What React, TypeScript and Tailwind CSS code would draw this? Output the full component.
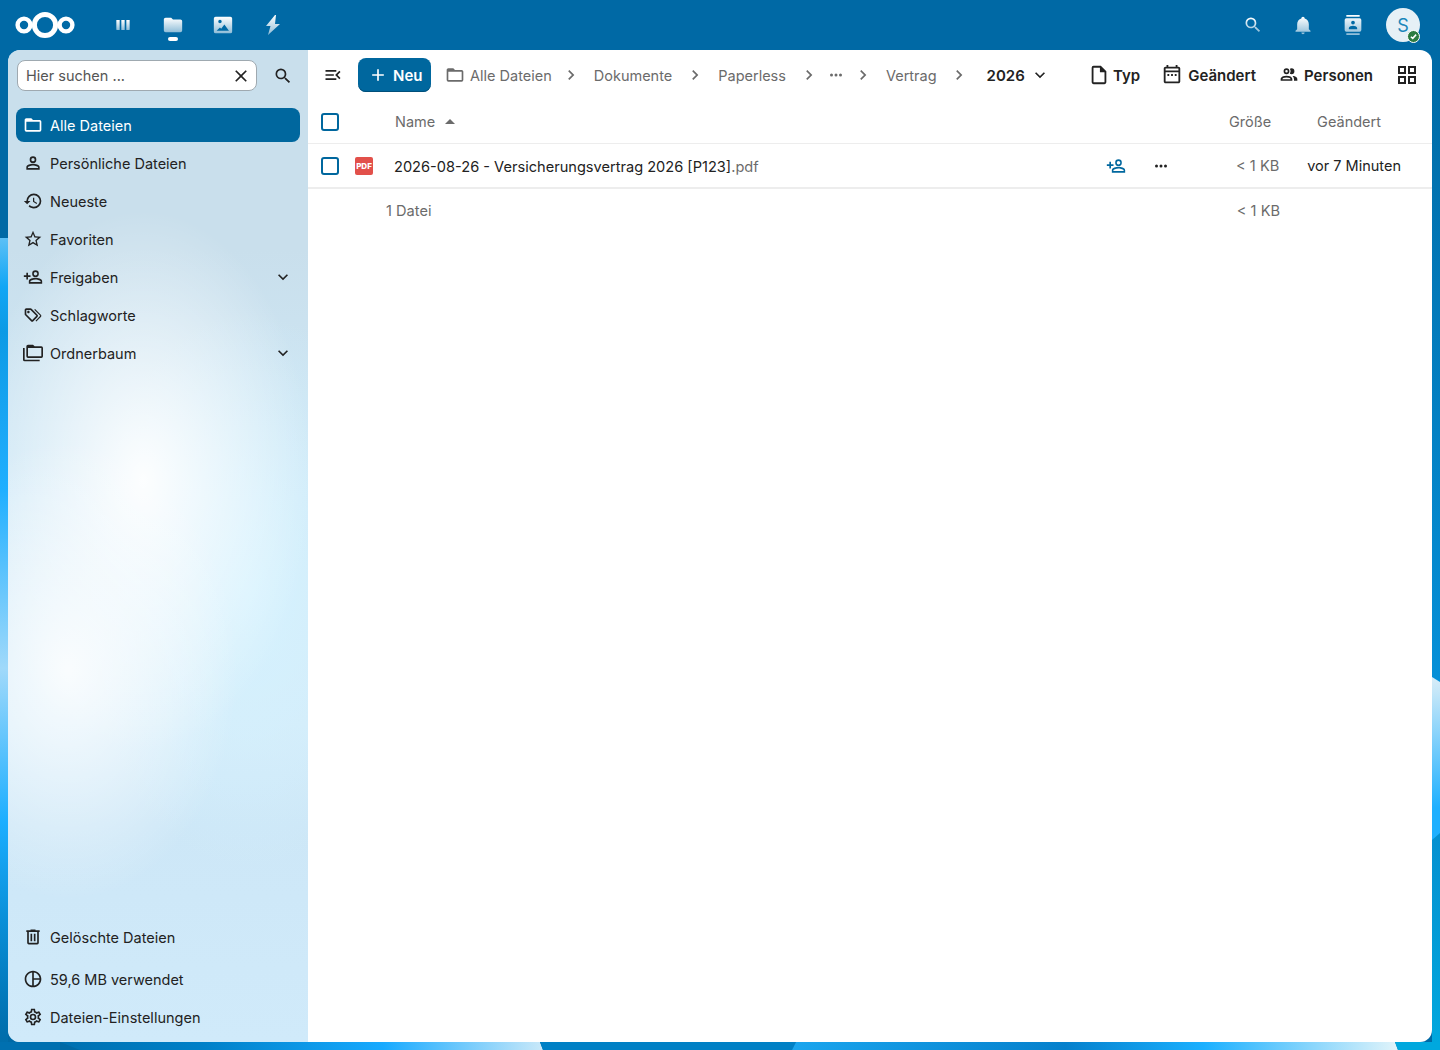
import React from "react";

const P = {
  folder: "M20,18H4V8H20M20,6H12L10,4H4C2.89,4 2,4.89 2,6V18A2,2 0 0,0 4,20H20A2,2 0 0,0 22,18V8C22,6.89 21.1,6 20,6Z",
  folderFill: "M10,4H4C2.89,4 2,4.89 2,6V18A2,2 0 0,0 4,20H20A2,2 0 0,0 22,18V8C22,6.89 21.1,6 20,6H12L10,4Z",
  account: "M12,4A4,4 0 0,1 16,8A4,4 0 0,1 12,12A4,4 0 0,1 8,8A4,4 0 0,1 12,4M12,6A2,2 0 0,0 10,8A2,2 0 0,0 12,10A2,2 0 0,0 14,8A2,2 0 0,0 12,6M12,13C14.67,13 20,14.33 20,17V20H4V17C4,14.33 9.33,13 12,13M12,14.9C9.03,14.9 5.9,16.36 5.9,17V18.1H18.1V17C18.1,16.36 14.97,14.9 12,14.9Z",
  history: "M13.5,8H12V13L16.28,15.54L17,14.33L13.5,12.25V8M13,3A9,9 0 0,0 4,12H1L4.96,16.03L9,12H6A7,7 0 0,1 13,5A7,7 0 0,1 20,12A7,7 0 0,1 13,19C11.07,19 9.32,18.21 8.06,16.94L6.64,18.36C8.27,20 10.5,21 13,21A9,9 0 0,0 22,12A9,9 0 0,0 13,3",
  star: "M12,15.39L8.24,17.66L9.23,13.38L5.91,10.5L10.29,10.13L12,6.09L13.71,10.13L18.09,10.5L14.77,13.38L15.76,17.66M22,9.24L14.81,8.63L12,2L9.19,8.63L2,9.24L7.45,13.97L5.82,21L12,17.27L18.18,21L16.54,13.97L22,9.24Z",
  accountPlus: "M15,4A4,4 0 0,0 11,8A4,4 0 0,0 15,12A4,4 0 0,0 19,8A4,4 0 0,0 15,4M15,5.9C16.16,5.9 17.1,6.84 17.1,8C17.1,9.16 16.16,10.1 15,10.1A2.1,2.1 0 0,1 12.9,8A2.1,2.1 0 0,1 15,5.9M4,7V10H1V12H4V15H6V12H9V10H6V7H4M15,13C12.33,13 7,14.33 7,17V20H23V17C23,14.33 17.67,13 15,13M15,14.9C17.97,14.9 21.1,16.36 21.1,17V18.1H8.9V17C8.9,16.36 12,14.9 15,14.9Z",
  tags: "M6.5 10C7.3 10 8 9.3 8 8.5S7.3 7 6.5 7 5 7.7 5 8.5 5.7 10 6.5 10M9 6L16 13L11 18L4 11V6H9M9 4H4C2.9 4 2 4.9 2 6V11C2 11.6 2.2 12.1 2.6 12.4L9.6 19.4C9.9 19.8 10.4 20 11 20S12.1 19.8 12.4 19.4L17.4 14.4C17.8 14 18 13.5 18 13C18 12.4 17.8 11.9 17.4 11.6L10.4 4.6C10.1 4.2 9.6 4 9 4M13.5 5.7L14.5 4.7L21.4 11.6C21.8 12 22 12.5 22 13S21.8 14.1 21.4 14.4L16 19.8L15 18.8L20.7 13L13.5 5.7Z",
  folders: "M22,4A2,2 0 0,1 24,6V16A2,2 0 0,1 22,18H6A2,2 0 0,1 4,16V4A2,2 0 0,1 6,2H12L14,4H22M2,6V20H20V22H2A2,2 0 0,1 0,20V11H0V6H2M6,6V16H22V6H6Z",
  trash: "M9,3V4H4V6H5V19A2,2 0 0,0 7,21H17A2,2 0 0,0 19,19V6H20V4H15V3H9M7,6H17V19H7V6M9,8V17H11V8H9M13,8V17H15V8H13Z",
  pie: "M12 2C6.5 2 2 6.5 2 12S6.5 22 12 22 22 17.5 22 12 17.5 2 12 2M13 4.1C16.6 4.5 19.5 7.4 19.9 11H13V4.1M4 12C4 7.9 7.1 4.5 11 4.1V19.9C7.1 19.5 4 16.1 4 12M13 19.9V13H19.9C19.5 16.6 16.6 19.5 13 19.9Z",
  cog: "M12,8A4,4 0 0,1 16,12A4,4 0 0,1 12,16A4,4 0 0,1 8,12A4,4 0 0,1 12,8M12,10A2,2 0 0,0 10,12A2,2 0 0,0 12,14A2,2 0 0,0 14,12A2,2 0 0,0 12,10M10,22C9.75,22 9.54,21.82 9.5,21.58L9.13,18.93C8.5,18.68 7.96,18.34 7.44,17.94L4.95,18.95C4.73,19.03 4.46,18.95 4.34,18.73L2.34,15.27C2.21,15.05 2.27,14.78 2.46,14.63L4.57,12.97L4.5,12L4.57,11L2.46,9.37C2.27,9.22 2.21,8.95 2.34,8.73L4.34,5.27C4.46,5.05 4.73,4.96 4.95,5.05L7.44,6.05C7.96,5.66 8.5,5.32 9.13,5.07L9.5,2.42C9.54,2.18 9.75,2 10,2H14C14.25,2 14.46,2.18 14.5,2.42L14.87,5.07C15.5,5.32 16.04,5.66 16.56,6.05L19.05,5.05C19.27,4.96 19.54,5.05 19.66,5.27L21.66,8.73C21.79,8.95 21.73,9.22 21.54,9.37L19.43,11L19.5,12L19.43,13L21.54,14.63C21.73,14.78 21.79,15.05 21.66,15.27L19.66,18.73C19.54,18.95 19.27,19.04 19.05,18.95L16.56,17.95C16.04,18.34 15.5,18.68 14.87,18.93L14.5,21.58C14.46,21.82 14.25,22 14,22H10M11.25,4L10.88,6.61C9.68,6.86 8.62,7.5 7.85,8.39L5.44,7.35L4.69,8.65L6.8,10.2C6.4,11.37 6.4,12.64 6.8,13.8L4.68,15.36L5.43,16.66L7.86,15.62C8.63,16.5 9.68,17.14 10.87,17.38L11.24,20H12.76L13.13,17.39C14.32,17.14 15.37,16.5 16.14,15.62L18.57,16.66L19.32,15.36L17.2,13.81C17.6,12.64 17.6,11.37 17.2,10.2L19.31,8.65L18.56,7.35L16.15,8.39C15.38,7.5 14.32,6.86 13.12,6.62L12.75,4H11.25Z",
  magnify: "M9.5,3A6.5,6.5 0 0,1 16,9.5C16,11.11 15.41,12.59 14.44,13.73L14.71,14H15.5L20.5,19L19,20.5L14,15.5V14.71L13.73,14.44C12.59,15.41 11.11,16 9.5,16A6.5,6.5 0 0,1 3,9.5A6.5,6.5 0 0,1 9.5,3M9.5,5C7,5 5,7 5,9.5C5,12 7,14 9.5,14C12,14 14,12 14,9.5C14,7 12,5 9.5,5Z",
  close: "M19,6.41L17.59,5L12,10.59L6.41,5L5,6.41L10.59,12L5,17.59L6.41,19L12,13.41L17.59,19L19,17.59L13.41,12L19,6.41Z",
  plus: "M19,13H13V19H11V13H5V11H11V5H13V11H19V13Z",
  right: "M8.59,16.58L13.17,12L8.59,7.41L10,6L16,12L10,18L8.59,16.58Z",
  down: "M7.41,8.58L12,13.17L16.59,8.58L18,10L12,16L6,10L7.41,8.58Z",
  dots: "M16,12A2,2 0 0,1 18,10A2,2 0 0,1 20,12A2,2 0 0,1 18,14A2,2 0 0,1 16,12M10,12A2,2 0 0,1 12,10A2,2 0 0,1 14,12A2,2 0 0,1 12,14A2,2 0 0,1 10,12M4,12A2,2 0 0,1 6,10A2,2 0 0,1 8,12A2,2 0 0,1 6,14A2,2 0 0,1 4,12Z",
  file: "M14,2H6A2,2 0 0,0 4,4V20A2,2 0 0,0 6,22H18A2,2 0 0,0 20,20V8L14,2M18,20H6V4H13V9H18V20Z",
  calendar: "M21 5V19C21 20.11 20.11 21 19 21H5C3.89 21 3 20.1 3 19V5C3 3.9 3.9 3 5 3H6V1H8V3H16V1H18V3H19C20.11 3 21 3.9 21 5M5 7H19V5H5V7M19 19V9H5V19H19M7 11H9V13H7V11M11 11H13V13H11V11M15 11H17V13H15V11Z",
  people: "M13.07 10.41A5 5 0 0 0 13.07 4.59A3.39 3.39 0 0 1 15 4A3.5 3.5 0 0 1 15 11A3.39 3.39 0 0 1 13.07 10.41M5.5 7.5A3.5 3.5 0 1 1 9 11A3.5 3.5 0 0 1 5.5 7.5M7.5 7.5A1.5 1.5 0 1 0 9 6A1.5 1.5 0 0 0 7.5 7.5M16 17V19H2V17S2 13 9 13 16 17 16 17M14 17C13.86 16.22 12.67 15 9 15S4.07 16.22 4 17M15.95 13A5.32 5.32 0 0 1 18 17V19H22V17S22 13.37 15.94 13Z",
  grid: "M3 11H11V3H3M5 5H9V9H5M13 21H21V13H13M15 15H19V19H15M3 21H11V13H3M5 15H9V19H5M13 3V11H21V3M19 9H15V5H19Z",
  bell: "M21,19V20H3V19L5,17V11C5,7.9 7.03,5.17 10,4.29C10,4.19 10,4.1 10,4A2,2 0 0,1 12,2A2,2 0 0,1 14,4C14,4.1 14,4.19 14,4.29C16.97,5.17 19,7.9 19,11V17L21,19M14,21A2,2 0 0,1 12,23A2,2 0 0,1 10,21",
  contacts: "M20,0H4V2H20V0M4,24H20V22H4V24M20,4H4A2,2 0 0,0 2,6V18A2,2 0 0,0 4,20H20A2,2 0 0,0 22,18V6A2,2 0 0,0 20,4M12,6.75A2.25,2.25 0 0,1 14.25,9A2.25,2.25 0 0,1 12,11.25A2.25,2.25 0 0,1 9.75,9A2.25,2.25 0 0,1 12,6.75M17,17H7V15.5C7,13.83 10.33,13 12,13C13.67,13 17,13.83 17,15.5V17Z",
  photos: "M4 3H20A2 2 0 0 1 22 5V19A2 2 0 0 1 20 21H4A2 2 0 0 1 2 19V5A2 2 0 0 1 4 3ZM8.7 6.4A1.9 1.9 0 1 0 8.7 10.2A1.9 1.9 0 1 0 8.7 6.4ZM5 18.3L8.7 14.7L10 16L13.5 11.5L18.5 18.3Z",
  bolt: "M14.4 0L3.6 13.2H9L6 24L20.4 10.8H14.4L15.6 0Z",
  dashboard: "M4 6H8V18H5A1 1 0 0 1 4 17ZM10 6H14V18H10ZM16 6H20V17A1 1 0 0 1 19 18H16Z",
  toggle: "M21,15.61L19.59,17L14.58,12L19.59,7L21,8.39L17.44,12L21,15.61M3,6H16V8H3V6M3,13V11H13V13H3M3,18V16H16V18H3Z",
};

function Icon({ d, size = 20, className = "", fill = "currentColor" }: { d: string; size?: number; className?: string; fill?: string }) {
  return (
    <svg width={size} height={size} viewBox="0 0 24 24" className={`shrink-0 ${className}`} fill={fill} fillRule="evenodd">
      <path d={d} />
    </svg>
  );
}

function HeaderIcon({ d, size = 20, active = false }: { d: string; size?: number; active?: boolean }) {
  return (
    <div className="relative flex w-[50px] h-[50px] items-center justify-center">
      <Icon d={d} size={size} fill="url(#headerGrad)" />
      {active && <span className="absolute left-[20px] top-[37px] h-[4px] w-[10px] rounded-full bg-white" />}
    </div>
  );
}

function NavRow({ d, label, active, chevron, size = 20 }: { d: string; label: string; active?: boolean; chevron?: boolean; size?: number }) {
  return (
    <div className={`flex h-[34px] items-center rounded-lg pr-[8px] ${active ? "bg-[#00679e] text-white" : "text-[#222222]"}`}>
      <div className="flex w-[34px] items-center justify-center">
        <Icon d={d} size={size} />
      </div>
      <span className="pt-[2px] text-[14.5px] leading-[20px] whitespace-nowrap">{label}</span>
      {chevron && <Icon d={P.down} size={20} className="ml-auto mr-[-1px] text-[#222222]" />}
    </div>
  );
}

function Crumb({ label, chevronClass = "mx-[13px]" }: { label: string; chevronClass?: string }) {
  return (
    <>
      <span className="pt-[2px] text-[14.5px] whitespace-nowrap text-[#6b6b6b]">{label}</span>
      <Icon d={P.right} size={20} className={`${chevronClass} text-[#6b6b6b]`} />
    </>
  );
}

function Filter({ d, label, size = 20, gap = "gap-[5px]", className = "" }: { d: string; label: string; size?: number; gap?: string; className?: string }) {
  return (
    <div className={`flex items-center ${gap} ${className}`}>
      <Icon d={d} size={size} className="text-[#222222]" />
      <span className="pt-[3px] text-[15px] font-semibold whitespace-nowrap text-[#222222]">{label}</span>
    </div>
  );
}

function Check() {
  return <span className="block h-[18px] w-[18px] rounded-[3px] border-2 border-[#00679e] bg-white" />;
}

export default function App() {
  return (
    <div className="relative flex h-[1050px] w-[1440px] flex-col overflow-hidden bg-[#0069a5] font-['Inter','Liberation_Sans',sans-serif]">
      <svg width="0" height="0" className="absolute">
        <defs>
          <linearGradient id="headerGrad" x1="0" y1="0" x2="0" y2="1">
            <stop offset="0" stopColor="#ffffff" />
            <stop offset="1" stopColor="#8fbdd8" />
          </linearGradient>
        </defs>
      </svg>

      {/* wallpaper */}
      <svg className="absolute left-0 top-0" width="1440" height="1050" viewBox="0 0 1440 1050">
        <defs>
          <linearGradient id="wallLeft" x1="0" y1="238" x2="0" y2="1050" gradientUnits="userSpaceOnUse">
            <stop offset="0" stopColor="#5cc0f6" />
            <stop offset="0.06" stopColor="#12a6f5" />
            <stop offset="0.115" stopColor="#0d9ae5" />
            <stop offset="0.31" stopColor="#20afff" />
            <stop offset="0.53" stopColor="#a0d9fa" />
            <stop offset="0.72" stopColor="#1caeff" />
            <stop offset="0.84" stopColor="#0a8fd8" />
            <stop offset="0.97" stopColor="#0070b0" />
            <stop offset="1" stopColor="#006ca8" />
          </linearGradient>
          <linearGradient id="wallBottomLeft" x1="60" y1="0" x2="542" y2="0" gradientUnits="userSpaceOnUse">
            <stop offset="0" stopColor="#0070b0" />
            <stop offset="0.3" stopColor="#0080c8" />
            <stop offset="0.67" stopColor="#18aaff" />
            <stop offset="1" stopColor="#c8e8f9" />
          </linearGradient>
          <linearGradient id="wallBottom" x1="794" y1="0" x2="1396" y2="0" gradientUnits="userSpaceOnUse">
            <stop offset="0" stopColor="#1aa5ee" />
            <stop offset="0.45" stopColor="#0580cc" />
            <stop offset="0.68" stopColor="#1bb0ff" />
            <stop offset="1" stopColor="#dff3fa" />
          </linearGradient>
          <linearGradient id="wallRightTop" x1="0" y1="50" x2="0" y2="680" gradientUnits="userSpaceOnUse">
            <stop offset="0" stopColor="#006aa5" />
            <stop offset="1" stopColor="#0590d8" />
          </linearGradient>
          <linearGradient id="wallRightMid" x1="0" y1="680" x2="0" y2="840" gradientUnits="userSpaceOnUse">
            <stop offset="0" stopColor="#d5ecf8" />
            <stop offset="0.8" stopColor="#1fb0ff" />
            <stop offset="1" stopColor="#1fb0ff" />
          </linearGradient>
          <linearGradient id="wallRightBottom" x1="0" y1="835" x2="0" y2="1050" gradientUnits="userSpaceOnUse">
            <stop offset="0" stopColor="#0590d0" />
            <stop offset="1" stopColor="#00a8de" />
          </linearGradient>
        </defs>
        <rect x="0" y="238" width="8" height="812" fill="url(#wallLeft)" />
        <rect x="0" y="1042" width="60" height="8" fill="#0070b0" />
        <polygon points="60,1042 540,1042 543,1050 80,1050" fill="url(#wallBottomLeft)" />
        <polygon points="540,1042 796,1042 792,1050 543,1050" fill="#0080c5" />
        <polygon points="796,1042 1395,1042 1398,1050 792,1050" fill="url(#wallBottom)" />
        <polygon points="1395,1042 1440,1042 1440,1050 1398,1050" fill="#00a8de" />
        <rect x="1432" y="50" width="8" height="640" fill="url(#wallRightTop)" />
        <rect x="1432" y="830" width="8" height="212" fill="url(#wallRightBottom)" />
        <polygon points="1432,677 1440,682 1440,833 1432,840" fill="url(#wallRightMid)" />
      </svg>

      <header className="relative flex h-[50px] shrink-0 items-center">
        <svg className="ml-[14px] shrink-0" width="62" height="30" viewBox="0 0 62 30" fill="none" stroke="#ffffff">
          <circle cx="10" cy="15" r="6.4" strokeWidth="4.4" />
          <circle cx="31" cy="15" r="10.6" strokeWidth="5" />
          <circle cx="52" cy="15" r="6.4" strokeWidth="4.4" />
        </svg>
        <div className="ml-[22px] flex">
          <HeaderIcon d={P.dashboard} size={20} />
          <HeaderIcon d={P.folderFill} size={22} active />
          <HeaderIcon d={P.photos} size={22} />
          <HeaderIcon d={P.bolt} size={20} />
        </div>
        <div className="ml-auto mr-[20px] flex items-center">
          <HeaderIcon d={P.magnify} size={20} />
          <HeaderIcon d={P.bell} size={20} />
          <HeaderIcon d={P.contacts} size={20} />
          <div className="relative ml-[8px] flex h-[34px] w-[34px] items-center justify-center rounded-full bg-[#e6f0f6] text-[18px] text-[#1a86ba]">
            S
            <span className="absolute left-[21px] top-[22px] flex h-[13px] w-[13px] items-center justify-center rounded-full border border-white bg-[#2d7b41]">
              <svg width="9" height="9" viewBox="0 0 24 24" fill="none" stroke="#ffffff" strokeWidth="4">
                <path d="M5 12.5L10 17L19 7" />
              </svg>
            </span>
          </div>
        </div>
      </header>

      <main className="relative mx-[8px] flex h-[992px] overflow-hidden rounded-xl">
        <aside className="flex w-[300px] shrink-0 flex-col bg-[#cfe6f5] bg-[radial-gradient(ellipse_170px_230px_at_60px_620px,rgba(255,255,255,0.85),transparent),radial-gradient(ellipse_170px_270px_at_135px_430px,rgba(255,255,255,0.95),transparent),radial-gradient(ellipse_170px_280px_at_240px_540px,rgba(214,243,255,0.9),transparent),linear-gradient(180deg,#c9dfec_0%,#c9dfec_20%,#d0e9f7_45%,#d3ebf9_68%,#cde7f7_78%,#d0eafa_100%)]">
          <div className="flex items-center pl-[9px] pt-[10px]">
            <div className="flex h-[31px] w-[240px] items-center rounded-lg border border-[#9fa9b0] bg-white pl-[8px] pr-[5px]">
              <span className="pt-[1px] text-[14.5px] text-[#555555]">Hier suchen ...</span>
              <Icon d={P.close} size={20} className="ml-auto text-[#222222]" />
            </div>
            <Icon d={P.magnify} size={20} className="ml-[16px] text-[#222222]" />
          </div>
          <nav className="mt-[17px] flex flex-col gap-[4px] px-[8px]">
            <NavRow d={P.folder} label="Alle Dateien" active />
            <NavRow d={P.account} label="Persönliche Dateien" />
            <NavRow d={P.history} label="Neueste" />
            <NavRow d={P.star} label="Favoriten" />
            <NavRow d={P.accountPlus} label="Freigaben" chevron />
            <NavRow d={P.tags} label="Schlagworte" />
            <NavRow d={P.folders} label="Ordnerbaum" chevron />
          </nav>
          <div className="mt-auto flex flex-col px-[8px] pb-[8px]">
            <NavRow d={P.trash} label="Gelöschte Dateien" />
            <div className="mt-[8px]"><NavRow d={P.pie} label="59,6 MB verwendet" /></div>
            <div className="mt-[4px]"><NavRow d={P.cog} label="Dateien-Einstellungen" /></div>
          </div>
        </aside>

        <section className="flex min-w-0 flex-1 flex-col bg-white">
          <div className="flex h-[50px] shrink-0 items-center">
            <Icon d={P.toggle} size={20} className="ml-[15px] text-[#222222]" />
            <div className="ml-[15px] flex h-[34px] w-[73px] items-center rounded-lg bg-[#00679e] pl-[10px] shadow-[inset_0_-1px_0_#004f7a]">
              <Icon d={P.plus} size={20} className="text-white" />
              <span className="ml-[5px] pt-[3px] text-[15px] font-semibold text-white">Neu</span>
            </div>
            <Icon d={P.folder} size={20} className="ml-[14px] mr-[5px] text-[#6b6b6b]" />
            <Crumb label="Alle Dateien" chevronClass="ml-[9px] mr-[13px]" />
            <Crumb label="Dokumente" />
            <Crumb label="Paperless" chevronClass="ml-[13px] mr-[8px]" />
            <Icon d={P.dots} size={18} className="mr-[8px] text-[#6b6b6b]" />
            <Icon d={P.right} size={20} className="mr-[13px] text-[#6b6b6b]" />
            <Crumb label="Vertrag" chevronClass="ml-[12px] mr-[5px]" />
            <span className="ml-[13px] pt-[3px] text-[15px] font-semibold text-[#222222]">2026</span>
            <Icon d={P.down} size={20} className="ml-[5px] text-[#222222]" />
            <Filter d={P.file} label="Typ" size={22} gap="gap-[3px]" className="ml-auto" />
            <Filter d={P.calendar} label="Geändert" size={22} className="ml-[21px]" />
            <Filter d={P.people} label="Personen" className="ml-[23px]" />
            <Icon d={P.grid} size={24} className="ml-[22px] mr-[13px] text-[#222222]" />
          </div>

          <div className="flex h-[44px] shrink-0 items-center border-b border-[#ededed] text-[14.5px] text-[#6b6b6b]">
            <div className="ml-[13px]"><Check /></div>
            <span className="ml-[56px]">Name</span>
            <svg width="10" height="5" viewBox="0 0 10 5" className="ml-[10px]" fill="#6b6b6b"><path d="M0 5L5 0L10 5Z" /></svg>
            <span className="ml-auto mr-[46px]">Größe</span>
            <span className="mr-[51px]">Geändert</span>
          </div>

          <div className="flex h-[45px] shrink-0 items-center border-b-2 border-[#ededed]">
            <div className="ml-[13px]"><Check /></div>
            <span className="ml-[16px] flex h-[18px] w-[18px] items-center justify-center rounded-[2px] bg-[#e2504a] text-[8px] font-extrabold leading-none text-white">PDF</span>
            <span className="ml-[21px] pt-[3px] text-[14.6px] leading-[20px] whitespace-nowrap text-[#222222]">
              2026-08-26 - Versicherungsvertrag 2026 [P123]<span className="text-[#6b6b6b]">.pdf</span>
            </span>
            <Icon d={P.accountPlus} size={20} className="ml-auto text-[#00679e]" />
            <Icon d={P.dots} size={18} className="ml-[26px] text-[#222222]" />
            <span className="ml-[65px] w-[44px] pt-[1px] text-right text-[14.6px] leading-[20px] whitespace-nowrap text-[#6b6b6b]">&lt; 1 KB</span>
            <span className="ml-[28px] mr-[31px] pt-[1px] text-[14.5px] leading-[20px] whitespace-nowrap text-[#222222]">vor 7 Minuten</span>
          </div>

          <div className="flex h-[44px] shrink-0 items-center text-[14.6px] leading-[20px] text-[#6b6b6b]">
            <span className="ml-[78px]">1 Datei</span>
            <span className="ml-auto mr-[152px]">&lt; 1 KB</span>
          </div>
        </section>
      </main>
    </div>
  );
}
